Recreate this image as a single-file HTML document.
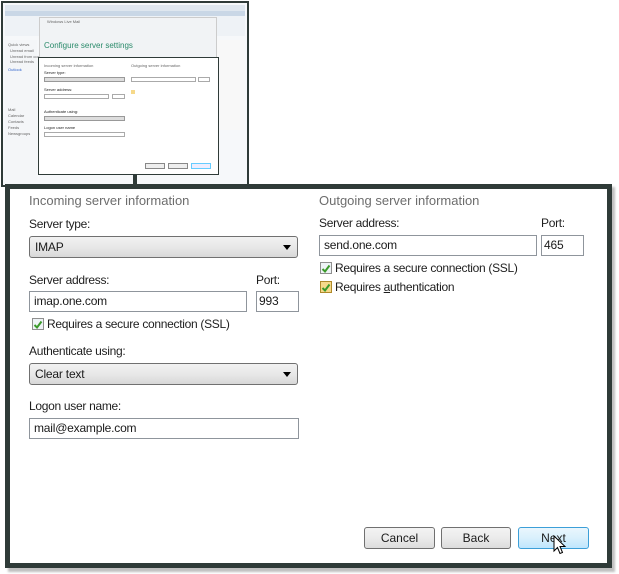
<!DOCTYPE html>
<html><head><meta charset="utf-8"><style>
*{box-sizing:border-box;margin:0;padding:0}
body{width:619px;height:574px;background:#fff;position:relative;overflow:hidden;font-family:"Liberation Sans",sans-serif;font-size:12px;color:#1a1a1a}
.a{position:absolute}
.lbl{position:absolute;font-size:12px;letter-spacing:-0.3px;color:#1e1e1e}
.ttl{position:absolute;font-size:13px;color:#6d6d6d}
.inp{position:absolute;border:1px solid #8f959c;background:#fff;padding:0 0 0 4px;line-height:19px;font-size:12px;letter-spacing:-0.2px}
.sel{position:absolute;border:1px solid #707070;border-radius:3px;background:linear-gradient(#f2f2f2,#e8e8e8 50%,#d8d8d8);padding-left:5px;line-height:20px;font-size:12px;letter-spacing:-0.2px}
.sel:after{content:"";position:absolute;right:6px;top:8px;border-left:4px solid transparent;border-right:4px solid transparent;border-top:5px solid #000}
.cb{position:absolute;width:12px;height:12px;border:1px solid #8f8f8f;background:#eef3f6}
.btn{position:absolute;height:22px;border:1px solid #707070;border-radius:3px;background:linear-gradient(#f3f3f3,#ebebeb 50%,#dcdcdc);text-align:center;line-height:20px;font-size:12px}
.tn{position:absolute;font-size:4px;color:#666;white-space:nowrap}
</style></head><body>
<!-- thumbnail -->
<div class="a" style="left:1px;top:1px;width:248px;height:186px;border:2px solid #2f3b38;background:#f6f8fa"></div>
<div class="a" style="left:5px;top:5px;width:240px;height:8px;background:#dfe7ef"></div>
<div class="a" style="left:5px;top:11px;width:240px;height:5px;background:#c9d7e6"></div>
<div class="a" style="left:5px;top:16px;width:240px;height:20px;background:#eef2f6"></div>
<div class="a" style="left:5px;top:40px;width:32px;height:140px;background:#f4f6f8"></div>
<div class="tn" style="left:8px;top:42px">Quick views</div>
<div class="tn" style="left:10px;top:48px">Unread email</div>
<div class="tn" style="left:10px;top:54px">Unread from contacts</div>
<div class="tn" style="left:10px;top:59px">Unread feeds</div>
<div class="tn" style="left:8px;top:67px;color:#36c">Outlook</div>
<div class="tn" style="left:8px;top:107px">Mail</div>
<div class="tn" style="left:8px;top:113px">Calendar</div>
<div class="tn" style="left:8px;top:119px">Contacts</div>
<div class="tn" style="left:8px;top:125px">Feeds</div>
<div class="tn" style="left:8px;top:131px">Newsgroups</div>
<div class="a" style="left:39px;top:17px;width:178px;height:42px;background:#f1f3f5;border:1px solid #ccc"></div>
<div class="tn" style="left:47px;top:19px">Windows Live Mail</div>
<div class="a" style="left:44px;top:41px;font-size:8px;color:#2a8a6a">Configure server settings</div>
<div class="a" style="left:217px;top:40px;width:28px;height:90px;background:#f8f8f8"></div>
<div class="a" style="left:38px;top:57px;width:181px;height:118px;border:1px solid #2f3b38;background:#fff"></div>
<div class="tn" style="left:44px;top:63px">Incoming server information</div>
<div class="tn" style="left:44px;top:70px;color:#222">Server type:</div>
<div class="a" style="left:44px;top:77px;width:81px;height:5px;background:#ddd;border:1px solid #999"></div>
<div class="tn" style="left:44px;top:87px;color:#222">Server address:</div>
<div class="a" style="left:44px;top:94px;width:65px;height:5px;border:1px solid #aaa"></div>
<div class="a" style="left:112px;top:94px;width:13px;height:5px;border:1px solid #aaa"></div>
<div class="tn" style="left:44px;top:109px;color:#222">Authenticate using:</div>
<div class="a" style="left:44px;top:116px;width:81px;height:5px;background:#ddd;border:1px solid #999"></div>
<div class="tn" style="left:44px;top:125px;color:#222">Logon user name</div>
<div class="a" style="left:44px;top:132px;width:81px;height:5px;border:1px solid #aaa"></div>
<div class="tn" style="left:131px;top:63px">Outgoing server information</div>
<div class="a" style="left:131px;top:77px;width:65px;height:5px;border:1px solid #aaa"></div>
<div class="a" style="left:198px;top:77px;width:12px;height:5px;border:1px solid #aaa"></div>
<div class="a" style="left:131px;top:90px;width:4px;height:4px;background:#f6d98a"></div>
<div class="a" style="left:145px;top:163px;width:20px;height:6px;border:1px solid #888;background:#eee"></div>
<div class="a" style="left:168px;top:163px;width:20px;height:6px;border:1px solid #888;background:#eee"></div>
<div class="a" style="left:191px;top:163px;width:20px;height:6px;border:1px solid #6cf;background:#eef"></div>
<div class="a" style="left:133px;top:175px;width:4px;height:10px;background:#2f3b38"></div>
<!-- main frame -->
<div class="a" style="left:8px;top:187px;width:607px;height:385px;background:#bfbfbf;filter:blur(1px)"></div>
<div class="a" style="left:5px;top:184px;width:607px;height:384px;border:5px solid #2f3b38;background:#fff"></div>

<div class="ttl" style="left:29px;top:193px">Incoming server information</div>
<div class="lbl" style="left:29px;top:217px">Server type:</div>
<div class="sel" style="left:29px;top:236px;width:269px;height:22px">IMAP</div>
<div class="lbl" style="left:29px;top:273px">Server address:</div>
<div class="lbl" style="left:256px;top:273px">Port:</div>
<div class="inp" style="left:29px;top:291px;width:218px;height:21px">imap.one.com</div>
<div class="inp" style="left:256px;top:291px;width:43px;height:21px;padding-left:2px">993</div>
<div class="cb" style="left:32px;top:318px"><svg width="10" height="10" viewBox="0 0 10 10"><path d="M1.5 5 L4 7.5 L8.5 1.5" stroke="#3a9a2a" stroke-width="2" fill="none"/></svg></div>
<div class="lbl" style="left:47px;top:317px">Requires a secure connection (SSL)</div>
<div class="lbl" style="left:29px;top:344px">Authenticate using:</div>
<div class="sel" style="left:29px;top:363px;width:269px;height:22px">Clear text</div>
<div class="lbl" style="left:29px;top:399px">Logon user name:</div>
<div class="inp" style="left:29px;top:418px;width:270px;height:21px">mail@example.com</div>

<div class="ttl" style="left:319px;top:193px">Outgoing server information</div>
<div class="lbl" style="left:319px;top:216px">Server address:</div>
<div class="lbl" style="left:541px;top:216px">Port:</div>
<div class="inp" style="left:319px;top:235px;width:218px;height:21px">send.one.com</div>
<div class="inp" style="left:541px;top:235px;width:43px;height:21px;padding-left:2px">465</div>
<div class="cb" style="left:320px;top:262px"><svg width="10" height="10" viewBox="0 0 10 10"><path d="M1.5 5 L4 7.5 L8.5 1.5" stroke="#3a9a2a" stroke-width="2" fill="none"/></svg></div>
<div class="lbl" style="left:335px;top:261px">Requires a secure connection (SSL)</div>
<div class="cb" style="left:320px;top:281px;background:#f6d98a;border-color:#b08a2a"><svg width="10" height="10" viewBox="0 0 10 10"><path d="M1.5 5 L4 7.5 L8.5 1.5" stroke="#3a9a2a" stroke-width="2" fill="none"/></svg></div>
<div class="lbl" style="left:335px;top:280px">Requires <u>a</u>uthentication</div>

<div class="btn" style="left:364px;top:527px;width:71px">Cancel</div>
<div class="btn" style="left:441px;top:527px;width:70px">Back</div>
<div class="btn" style="left:518px;top:527px;width:71px;border-color:#3c9fd8;background:linear-gradient(#eaf6fd,#d9f0fc 50%,#bee6fd)">Next</div>
<svg class="a" style="left:553px;top:535px" width="14" height="22" viewBox="0 0 14 22"><path d="M1 1 L1 16 L4.5 12.5 L7 18.5 L9.5 17.5 L7 11.5 L12 11.5 Z" fill="#fff" stroke="#000" stroke-width="1"/></svg>
</body></html>
